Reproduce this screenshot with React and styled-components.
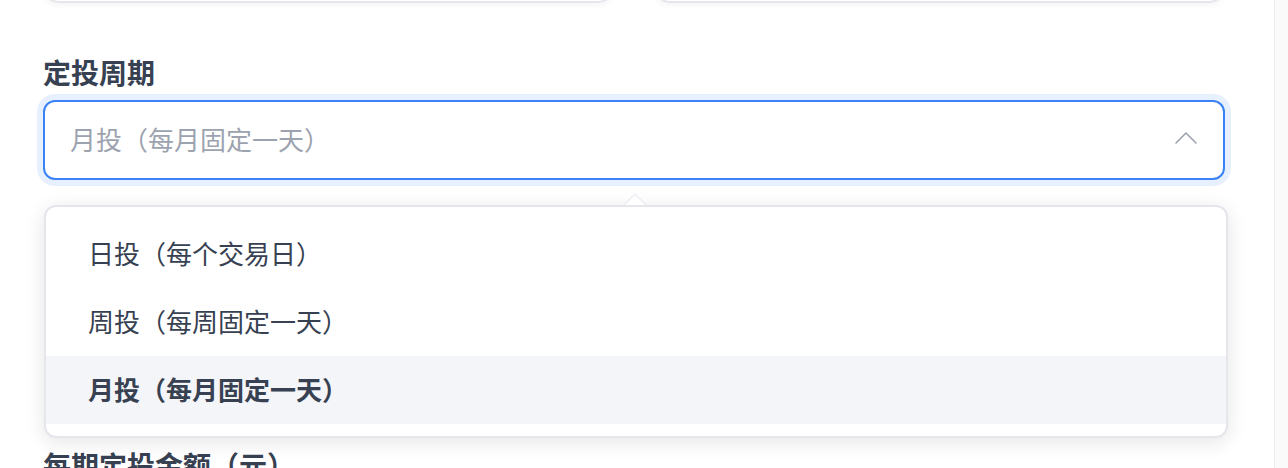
import React, { useState } from "react";
import styled, { createGlobalStyle } from "styled-components";

const GlobalStyle = createGlobalStyle`
  html, body {
    margin: 0;
    padding: 0;
    background: #ffffff;
    overflow: hidden;
  }
  body {
    font-family: "Noto Sans CJK SC", "Noto Sans", sans-serif;
    color: #374151;
  }
`;

const Page = styled.div`
  display: flex;
  width: 1288px;
  height: 468px;
  overflow: hidden;
`;

const Main = styled.main`
  flex: 1;
  display: flex;
  flex-direction: column;
  gap: 49px;
  padding: 0 49px 0 43px;
  min-width: 0;
`;

const ScrollTrack = styled.div`
  width: 13px;
  flex: none;
  background: #fafafa;
  border-left: 1px solid #ececec;
`;

const CardRow = styled.div`
  display: grid;
  grid-template-columns: 1fr 1fr;
  gap: 40px;
  margin-top: -97px;
`;

const Card = styled.div`
  height: 100px;
  box-sizing: border-box;
  border: 2px solid #e6e5ec;
  border-radius: 16px;
  background: #ffffff;
  box-shadow: 0 2px 6px rgba(17, 24, 39, 0.05);
`;

const FormItem = styled.div`
  display: flex;
  flex-direction: column;
  margin-top: ${(p) => p.$offset || 0}px;
`;

const Label = styled.label`
  font-size: 28px;
  line-height: 40px;
  font-weight: 700;
  color: #374151;
  margin-bottom: 8px;
  white-space: nowrap;
`;

const SelectWrap = styled.div`
  position: relative;
`;

const Trigger = styled.div`
  height: 80px;
  box-sizing: border-box;
  display: flex;
  align-items: center;
  padding: 0 25px 2px 25px;
  border: 2px solid ${(p) => (p.$open ? "#3b82f6" : "#d1d5db")};
  border-radius: 12px;
  background: #ffffff;
  box-shadow: ${(p) => (p.$open ? "0 0 0 6px rgba(59, 130, 246, 0.12)" : "none")};
  cursor: pointer;
`;

const Value = styled.span`
  flex: 1;
  font-size: 26px;
  line-height: 36px;
  color: ${(p) => (p.$placeholder ? "#9ca3af" : "#374151")};
  white-space: nowrap;
`;

const Chevron = styled.svg`
  width: 24px;
  height: 24px;
  flex: none;
  margin-top: -2px;
`;

const Dropdown = styled.ul`
  position: absolute;
  z-index: 10;
  top: 105px;
  left: 1px;
  right: -3px;
  margin: 0;
  padding: 13px 0 12px;
  list-style: none;
  background: #ffffff;
  border: 2px solid #e5e6ec;
  border-radius: 12px;
  box-shadow: 0 4px 20px rgba(0, 0, 0, 0.11);
`;

const Arrow = styled.span`
  position: absolute;
  top: -14px;
  left: calc(50% - 13px);
  width: 0;
  height: 0;
  border-left: 12px solid transparent;
  border-right: 12px solid transparent;
  border-bottom: 12px solid #ededf1;

  &::after {
    content: "";
    position: absolute;
    left: -10px;
    top: 2px;
    border-left: 10px solid transparent;
    border-right: 10px solid transparent;
    border-bottom: 10px solid #ffffff;
  }
`;

const Option = styled.li`
  height: 68px;
  box-sizing: border-box;
  display: flex;
  align-items: center;
  padding: 0 42px 4px;
  font-size: 26px;
  color: #374151;
  font-weight: ${(p) => (p.$selected ? 700 : 400)};
  background: ${(p) => (p.$selected ? "#f4f5f9" : "transparent")};
  cursor: pointer;
  white-space: nowrap;
`;

const cycles = ["日投（每个交易日）", "周投（每周固定一天）", "月投（每月固定一天）"];

export default function App() {
  const [value, setValue] = useState(cycles[2]);
  const [open, setOpen] = useState(true);

  return (
    <Page>
      <GlobalStyle />
      <Main>
        <CardRow>
          <Card />
          <Card />
        </CardRow>

        <FormItem>
          <Label>定投周期</Label>
          <SelectWrap>
            <Trigger $open={open} onClick={() => setOpen((o) => !o)}>
              <Value $placeholder={open}>{value}</Value>
              <Chevron viewBox="0 0 24 24" fill="none">
                <path
                  d={open ? "M2 17 L12 7 L22 17" : "M2 7 L12 17 L22 7"}
                  stroke="#9ca3af"
                  strokeWidth="1.6"
                  strokeLinecap="round"
                  strokeLinejoin="round"
                />
              </Chevron>
            </Trigger>
            {open && (
              <Dropdown>
                <Arrow />
                {cycles.map((c) => (
                  <Option
                    key={c}
                    $selected={c === value}
                    onClick={() => {
                      setValue(c);
                      setOpen(false);
                    }}
                  >
                    {c}
                  </Option>
                ))}
              </Dropdown>
            )}
          </SelectWrap>
        </FormItem>

        <FormItem $offset={216}>
          <Label>每期定投金额（元）</Label>
        </FormItem>
      </Main>
      <ScrollTrack />
    </Page>
  );
}
